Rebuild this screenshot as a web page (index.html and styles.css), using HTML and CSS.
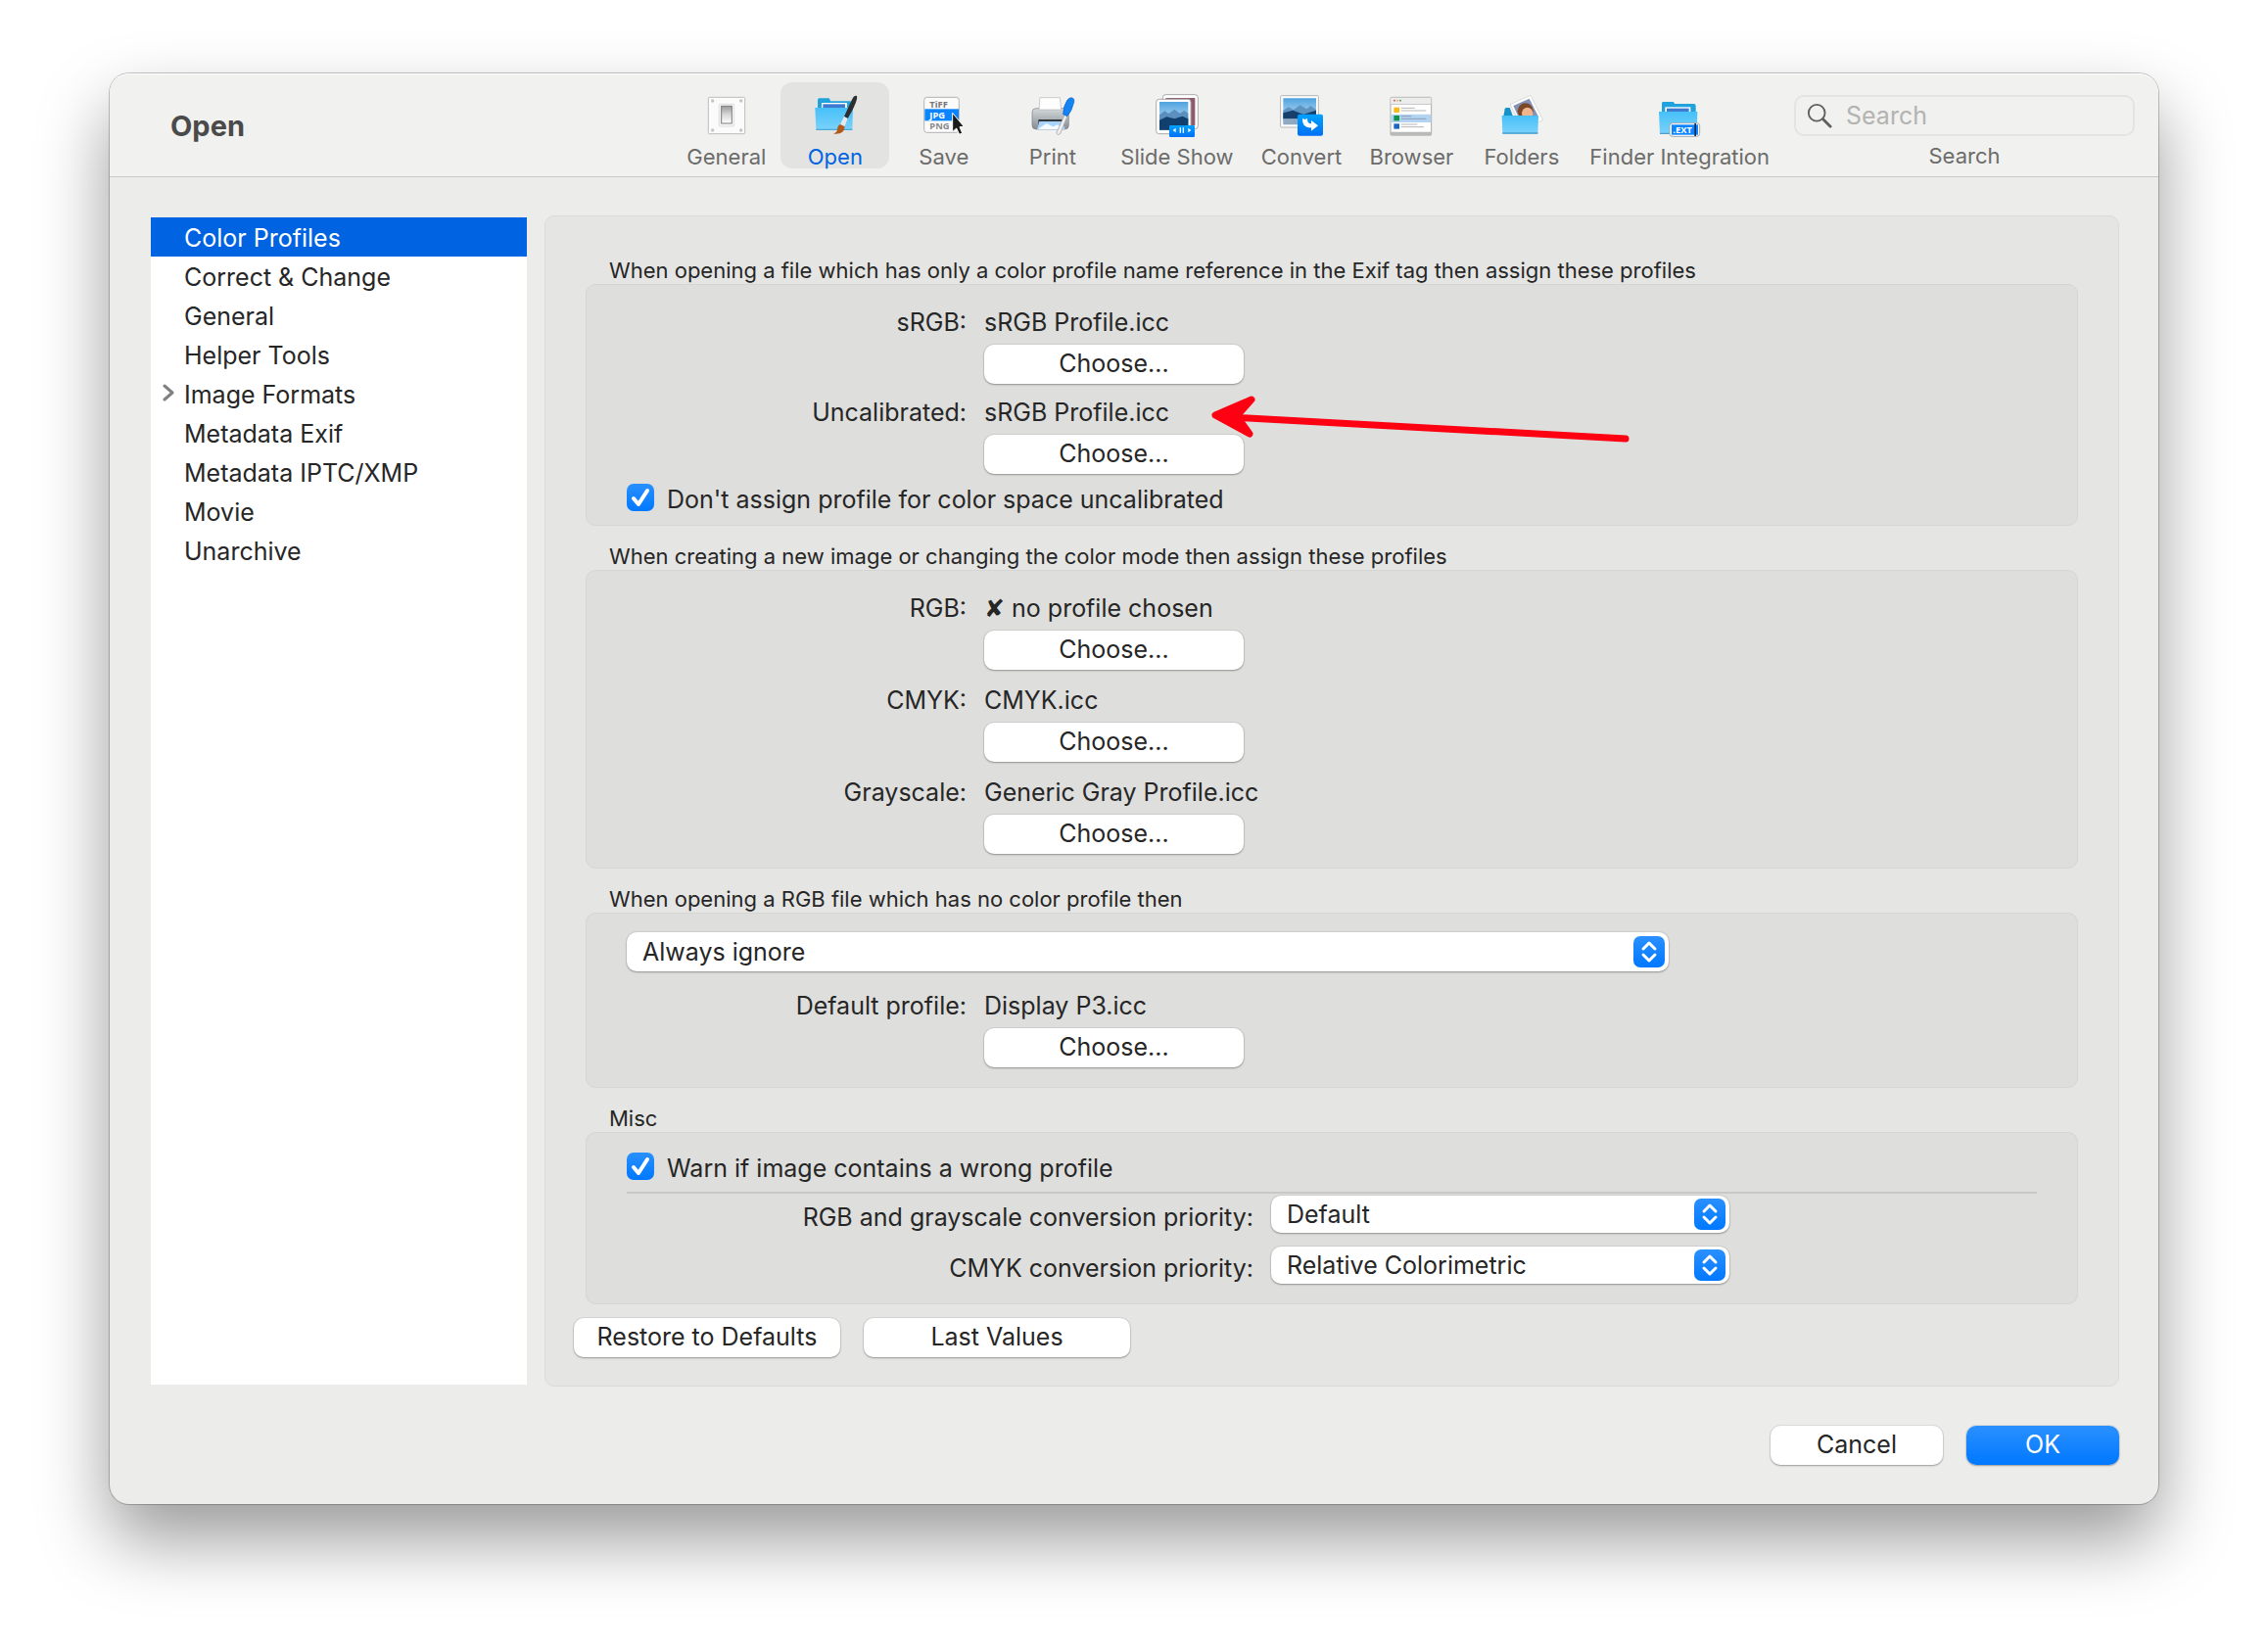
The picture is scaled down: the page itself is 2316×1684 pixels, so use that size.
FILE: index.html
```html
<!DOCTYPE html>
<html lang="en">
<head>
<meta charset="utf-8">
<title>Open</title>
<link rel="stylesheet" href="styles.css">
</head>
<body>
<svg class="defs" aria-hidden="true">
  <defs>
    <linearGradient id="folder" x1="0" y1="0" x2="0" y2="1"><stop offset="0" stop-color="#46c0f8"/><stop offset="1" stop-color="#7bd2fb"/></linearGradient>
    <linearGradient id="blue" x1="0" y1="0" x2="0" y2="1"><stop offset="0" stop-color="#00a2ff"/><stop offset="1" stop-color="#0070f5"/></linearGradient>
    <linearGradient id="sky" x1="0" y1="0" x2="0" y2="1"><stop offset="0" stop-color="#4fa3e0"/><stop offset="1" stop-color="#e4f1fa"/></linearGradient>
    <linearGradient id="metal" x1="0" y1="0" x2="0" y2="1"><stop offset="0" stop-color="#d5d9dc"/><stop offset="1" stop-color="#858c92"/></linearGradient>
    <linearGradient id="rocker" x1="0" y1="0" x2="0" y2="1"><stop offset="0" stop-color="#9a9a9a"/><stop offset=".5" stop-color="#d8d8d8"/><stop offset="1" stop-color="#fff"/></linearGradient>
    <symbol id="stepper" viewBox="0 0 32 32">
      <path d="M10 13l6-6 6 6M10 19l6 6 6-6" fill="none" stroke="#fff" stroke-width="3" stroke-linecap="round" stroke-linejoin="round"/>
    </symbol>
    <symbol id="tick" viewBox="0 0 28 28">
      <path d="M7 15l5 6 9-14" fill="none" stroke="#fff" stroke-width="4" stroke-linecap="round" stroke-linejoin="round"/>
    </symbol>
  </defs>
</svg>

<main class="window">
  <header class="toolbar">
    <h1 class="title">Open</h1>
    <nav class="tools" aria-label="Preference sections">
      <button class="tool" type="button">
        <svg class="tool-icon" viewBox="126 78 132 132" aria-hidden="true">
          <rect x="136" y="88" width="112" height="112" rx="3" fill="#fbfbfb" stroke="#bdbdbd" stroke-width="3"/>
          <g fill="#c4c4c4"><circle cx="149" cy="99" r="5"/><circle cx="236" cy="99" r="5"/><circle cx="149" cy="189" r="5"/><circle cx="236" cy="189" r="5"/></g>
          <rect x="169" y="109" width="46" height="68" rx="3" fill="#f6f6f6" stroke="#d2d2d2" stroke-width="2"/>
          <rect x="176" y="115" width="32" height="53" fill="url(#rocker)" stroke="#7d7d7d" stroke-width="3"/>
        </svg>
        <span>General</span>
      </button>
      <button class="tool tool-active" type="button" aria-pressed="true">
        <svg class="tool-icon" viewBox="456 78 132 132" aria-hidden="true">
          <path d="M468 96q0-5 5-5h28q3 0 4 3l2 6h60q7 0 7 6v30H468z" fill="#1fa3dc"/>
          <path d="M480 105h78v22h-78z" fill="#fff"/><path d="M484 109h68v14h-68z" fill="#3d7bd0"/>
          <path d="M460 120h116l-2 68H463z" fill="url(#folder)"/><path d="M463 185h111v4H463z" fill="#4aa9d8"/>
          <path d="M588 84q-8-4-14 9l-25 54 11 6q22-36 28-59 1-7 0-10z" fill="#2e2e30"/>
          <path d="M549 147l11 6-10 25-13-6z" fill="#e8e8ea"/>
          <path d="M537 171l14 7q-2 26-35 22 12-4 12-14 1-12 9-15z" fill="#b05a1c"/>
        </svg>
        <span>Open</span>
      </button>
      <button class="tool" type="button">
        <svg class="tool-icon" viewBox="783 78 132 132" aria-hidden="true">
          <rect x="788" y="88" width="107" height="108" rx="9" fill="#fbfbfb" stroke="#b3b3b3" stroke-width="3"/>
          <rect x="790" y="124" width="104" height="36" fill="#0a84ff"/>
          <g class="glyph-text"><text x="805" y="120" fill="#777">TiFF</text><text x="805" y="153" fill="#fff">JPG</text><text x="805" y="186" fill="#8a8a8a">PNG</text></g>
          <path d="M875 136v58l12-11 9 19 9-4-8-19 13-1z" fill="#1a1a1a" stroke="#fff" stroke-width="3" stroke-linejoin="round"/>
        </svg>
        <span>Save</span>
      </button>
      <button class="tool" type="button">
        <svg class="tool-icon" viewBox="1115 78 132 132" aria-hidden="true">
          <rect x="1118" y="122" width="112" height="64" rx="12" fill="url(#metal)" stroke="#7b8085" stroke-width="2"/>
          <path d="M1139 126l3-37h61l4 37z" fill="#fff" stroke="#b5b5b5" stroke-width="2"/>
          <path d="M1137 156h80v20h-80z" fill="#34393e"/><path d="M1140 162h72l7 25h-86z" fill="#a8d4fb"/><path d="M1140 182l22-14 20 10 14-6 18 14h-77z" fill="#f4faff"/>
          <path d="M1219 138l8 5-23 57q-8 6-12-2z" fill="#eee" stroke="#999" stroke-width="2"/>
          <path d="M1226 96q12-12 20-2 2 8-3 18-4 20-18 34l-12-6q0-24 13-44z" fill="#1484f5" stroke="#0b5bc0" stroke-width="2"/>
        </svg>
        <span>Print</span>
      </button>
      <button class="tool" type="button">
        <svg class="tool-icon" viewBox="237 78 132 132" aria-hidden="true">
          <rect x="259" y="80" width="108" height="105" rx="9" fill="#fff" stroke="#a9a9ad" stroke-width="3"/><path d="M268 90h90v84h-90z" fill="#8e5a6c"/>
          <rect x="239" y="94" width="106" height="106" rx="9" fill="#fff" stroke="#a9a9ad" stroke-width="3"/>
          <path d="M249 102h88v86h-88z" fill="url(#sky)"/>
          <path d="M249 142l16-12 12 8 18-13 16 12 14-8 12 8v51h-88z" fill="#5a8fbe"/><path d="M249 158l22-10 24 6 24-8 18 8v34h-88z" fill="#12406e"/>
          <rect x="279" y="174" width="78" height="36" rx="4" fill="url(#blue)"/>
          <path d="M299 182v14l-9-7zM337 182v14l9-7zM311 181h4v16h-4zM320 181h4v16h-4z" fill="#fff"/>
        </svg>
        <span>Slide Show</span>
      </button>
      <button class="tool" type="button">
        <svg class="tool-icon" viewBox="621 78 132 132" aria-hidden="true">
          <rect x="623" y="83" width="116" height="97" rx="3" fill="#fff" stroke="#b5b5b5" stroke-width="3"/>
          <path d="M631 91h101v81H631z" fill="url(#sky)"/>
          <path d="M631 128l16-10 16 8 20-14 20 12 12-10 17 12v30H631z" fill="#5f93c0"/><path d="M631 136l30-8 32 12 39-12v26H631z" fill="#163f6c"/><path d="M631 154h101v18H631z" fill="#8fa9c2"/>
          <rect x="675" y="140" width="78" height="66" rx="6" fill="url(#blue)"/>
          <path d="M690 153l8 3 7-4q-1 17 12 17v-10l21 16-21 16v-10q-28 2-27-28z" fill="#fff"/>
        </svg>
        <span>Convert</span>
      </button>
      <button class="tool" type="button">
        <svg class="tool-icon" viewBox="956 78 132 132" aria-hidden="true">
          <rect x="959" y="88" width="125" height="116" rx="3" fill="#fff" stroke="#aaa" stroke-width="3"/>
          <path d="M960 89h123v19H960z" fill="#ececec"/><path d="M959 108h125v2H959zM959 194h125v11H959z" fill="#b9b9b9"/>
          <path d="M960 140h123v25H960z" fill="#b4d2f2"/>
          <circle cx="971" cy="98" r="2.500" fill="#d33"/><circle cx="980" cy="98" r="2.500" fill="#e5a53a"/><circle cx="989" cy="98" r="2.500" fill="#4a8a3a"/>
          <path d="M969 119h17v16h-17z" fill="#fdb913"/><path d="M969 144h17v16h-17z" fill="#0d9547"/><path d="M969 169h17v16h-17z" fill="#1766c8"/>
          <path d="M991 121h42M991 129h77M991 171h50M991 179h70" stroke="#b5b5b5" stroke-width="3"/><path d="M991 146h32M991 154h77" stroke="#8b9fb8" stroke-width="3"/>
        </svg>
        <span>Browser</span>
      </button>
      <button class="tool" type="button">
        <svg class="tool-icon" viewBox="0 78 132 132" aria-hidden="true">
          <path d="M10 146l4-22q1-4 5-4h10l10 26z" fill="#1592c8"/>
          <path d="M30 110l63-28 38 76-62 26z" fill="#fff" stroke="#ccc" stroke-width="2"/>
          <path d="M40 114l49-22 28 56-56 12z" fill="#8492b8"/>
          <circle cx="77" cy="130" r="24" fill="#7a4728"/><ellipse cx="83" cy="137" rx="17" ry="18" fill="#f0b58c"/>
          <path d="M5 144h112l-2 56H7z" fill="url(#folder)"/><path d="M7 196h108v4H7z" fill="#4a9fce"/>
        </svg>
        <span>Folders</span>
      </button>
      <button class="tool" type="button">
        <svg class="tool-icon" viewBox="0 78 132 132" aria-hidden="true">
          <path d="M12 106q0-4 5-4h29q4 0 5 6h59q6 0 6 6v20H12z" fill="#1fa3dc"/>
          <path d="M22 118h78v16H22z" fill="#fff"/><path d="M27 122h68v12H27z" fill="#3d7bd0"/>
          <path d="M3 132h118l-2 69H6z" fill="url(#folder)"/><path d="M6 197h113v4H6z" fill="#4a9fce"/>
          <rect x="36" y="167" width="92" height="41" rx="9" fill="#fff" stroke="#9fa9b3" stroke-width="3"/><path d="M42 172h81v31H42z" fill="#0a84ff"/>
          <text class="glyph-text" x="46" y="197" fill="#fff">.EXT</text><path d="M112 168h5v39h-5z" fill="#0c2a55"/>
        </svg>
        <span>Finder Integration</span>
      </button>
      <div class="search">
        <div class="search-field">
          <svg class="search-icon" viewBox="0 0 28 28" aria-hidden="true"><circle cx="11" cy="11" r="9" fill="none" stroke="#5f5f5f" stroke-width="2"/><path d="M18 18l8 8" stroke="#5f5f5f" stroke-width="3" stroke-linecap="round"/></svg>
          <input class="search-input" id="search" type="search" placeholder="Search">
        </div>
        <label for="search">Search</label>
      </div>
    </nav>
  </header>

  <div class="content">
    <nav class="sidebar" aria-label="Open settings">
      <a class="side-link side-current" href="#color-profiles" aria-current="page">Color Profiles</a>
      <a class="side-link" href="#correct">Correct &amp; Change</a>
      <a class="side-link" href="#general">General</a>
      <a class="side-link" href="#helper-tools">Helper Tools</a>
      <a class="side-link" href="#image-formats"><svg class="disclosure" viewBox="0 0 12 18" aria-hidden="true"><path d="M2 2l8 7-8 7" fill="none" stroke="#808080" stroke-width="3" stroke-linecap="round" stroke-linejoin="round"/></svg>Image Formats</a>
      <a class="side-link" href="#metadata-exif">Metadata Exif</a>
      <a class="side-link" href="#metadata-iptc">Metadata IPTC/XMP</a>
      <a class="side-link" href="#movie">Movie</a>
      <a class="side-link" href="#unarchive">Unarchive</a>
    </nav>

    <form class="panel" id="color-profiles">
      <section class="group">
        <h2 class="group-title">When opening a file which has only a color profile name reference in the Exif tag then assign these profiles</h2>
        <div class="box box-tight">
          <div class="profile">
            <span class="label">sRGB:</span><span class="value">sRGB Profile.icc</span>
            <button class="button choose" type="button">Choose...</button>
          </div>
          <div class="profile">
            <span class="label">Uncalibrated:</span>
            <span class="value marked">sRGB Profile.icc
              <svg class="arrow" viewBox="0 0 430 50" aria-hidden="true"><path d="M425 35L20 13" fill="none" stroke="#fd0012" stroke-width="7" stroke-linecap="round"/><path d="M43-5L6 11l35 19-13-18z" fill="#fd0012" stroke="#fd0012" stroke-width="7" stroke-linejoin="round"/></svg>
            </span>
            <button class="button choose" type="button">Choose...</button>
          </div>
          <label class="check"><span class="check-box"><input type="checkbox" checked><svg aria-hidden="true"><use href="#tick"/></svg></span>Don't assign profile for color space uncalibrated</label>
        </div>
      </section>

      <section class="group">
        <h2 class="group-title">When creating a new image or changing the color mode then assign these profiles</h2>
        <div class="box">
          <div class="profile">
            <span class="label">RGB:</span><span class="value">✘ no profile chosen</span>
            <button class="button choose" type="button">Choose...</button>
          </div>
          <div class="profile">
            <span class="label">CMYK:</span><span class="value">CMYK.icc</span>
            <button class="button choose" type="button">Choose...</button>
          </div>
          <div class="profile">
            <span class="label">Grayscale:</span><span class="value">Generic Gray Profile.icc</span>
            <button class="button choose" type="button">Choose...</button>
          </div>
        </div>
      </section>

      <section class="group">
        <h2 class="group-title" id="no-profile">When opening a RGB file which has no color profile then</h2>
        <div class="box box-loose">
          <div class="popup popup-wide">
            <select aria-labelledby="no-profile"><option>Always ignore</option></select>
            <svg class="stepper" aria-hidden="true"><use href="#stepper"/></svg>
          </div>
          <div class="profile">
            <span class="label">Default profile:</span><span class="value">Display P3.icc</span>
            <button class="button choose" type="button">Choose...</button>
          </div>
        </div>
      </section>

      <section class="group">
        <h2 class="group-title">Misc</h2>
        <div class="box box-misc">
          <label class="check"><span class="check-box"><input type="checkbox" checked><svg aria-hidden="true"><use href="#tick"/></svg></span>Warn if image contains a wrong profile</label>
          <hr class="rule">
          <div class="priorities">
            <label class="label" for="rgb-priority">RGB and grayscale conversion priority:</label>
            <div class="popup">
              <select id="rgb-priority"><option>Default</option></select>
              <svg class="stepper" aria-hidden="true"><use href="#stepper"/></svg>
            </div>
            <label class="label" for="cmyk-priority">CMYK conversion priority:</label>
            <div class="popup">
              <select id="cmyk-priority"><option>Relative Colorimetric</option></select>
              <svg class="stepper" aria-hidden="true"><use href="#stepper"/></svg>
            </div>
          </div>
        </div>
      </section>

      <div class="panel-actions">
        <button class="button reset" type="button">Restore to Defaults</button>
        <button class="button reset" type="button">Last Values</button>
      </div>
    </form>
  </div>

  <footer class="actions">
    <button class="button cancel" type="button">Cancel</button>
    <button class="button ok" type="submit" form="color-profiles">OK</button>
  </footer>
</main>
</body>
</html>
```
FILE: styles.css
```css
* { box-sizing: border-box; }

body {
  margin: 0;
  min-height: 100vh;
  padding: 75px 112px;
  background: #fff;
  color: #262626;
  font: 25px/32px Inter, "Liberation Sans", sans-serif;
}

button, input, select { font: inherit; color: inherit; }

.defs { position: absolute; width: 0; height: 0; }

.window {
  background: #ececea;
  border-radius: 20px;
  box-shadow: 0 0 0 1px rgba(0, 0, 0, .22), 0 36px 72px rgba(0, 0, 0, .4);
}

/* Toolbar */
.toolbar {
  display: flex;
  align-items: center;
  justify-content: space-between;
  padding: 8px 24px 8px 62px;
  border-top: 1px solid #fff;
  border-bottom: 1px solid #c9c9c8;
  border-radius: 20px 20px 0 0;
  background: #f1f1ef;
}

.title { margin: 0; padding-top: 1px; font-size: 29px; font-weight: 700; color: #4a4a4a; }

.tools { display: flex; font-size: 22px; line-height: 26px; color: #6c6c6b; }

.tool {
  display: flex;
  flex-direction: column;
  align-items: center;
  gap: 7px;
  height: 88px;
  min-width: 111px;
  padding: 12px 14px 0;
  border: 0;
  border-radius: 12px;
  background: none;
  white-space: nowrap;
}

.tool-active { background: #e3e3e1; color: #0064e1; }
.tool-icon { flex: none; width: 44px; height: 44px; overflow: visible; }
.glyph-text { font: 700 28px "Open Sans", sans-serif; }

.search {
  display: flex;
  flex-direction: column;
  align-items: center;
  gap: 7px;
  width: 348px;
  margin-left: 11px;
  padding-top: 13px;
}

.search-field {
  display: flex;
  align-items: center;
  gap: 14px;
  width: 100%;
  height: 42px;
  padding: 0 11px;
  border: 2px solid #e4e4e2;
  border-radius: 10px;
}

.search-icon { flex: none; width: 26px; height: 26px; }
.search-input { flex: 1; min-width: 0; padding: 0; border: 0; background: none; font-size: 25px; }
.search-input::placeholder { color: #b3b3b2; opacity: 1; }

/* Body */
.content { display: flex; gap: 18px; padding: 39px 40px 0 42px; }

.sidebar { flex: none; width: 384px; margin: 2px 0; background: #fff; }

.side-link {
  display: block;
  position: relative;
  padding: 5px 34px 3px;
  color: inherit;
  text-decoration: none;
}

.side-current { background: #0063e1; color: #fff; }
.disclosure { position: absolute; left: 12px; top: 10px; width: 12px; height: 18px; }

.panel {
  flex: 1;
  min-width: 0;
  padding: 43px 29px 29px;
  border: 1px solid #dbdbd9;
  border-radius: 10px;
  background: #e5e5e3;
}

.group { margin: 0 12px 19px; }
.group-title { margin: 0; padding: 0 24px 2px; font-size: 22px; line-height: 24px; font-weight: 400; }

.box {
  display: flex;
  flex-direction: column;
  gap: 15px;
  padding: 22px 41px 14px;
  border: 1px solid #d5d5d3;
  border-radius: 10px;
  background: #dededc;
}

.box-tight { gap: 13px; padding-bottom: 10px; }
.box-tight .check { margin-top: -3px; }
.box-loose { gap: 19px; padding: 19px 41px 20px; }
.box-misc { gap: 0; padding: 20px 41px; }

.profile { display: grid; grid-template-columns: 347px 265px; gap: 7px 18px; }
.label { text-align: right; }
.value { white-space: nowrap; }
.marked { position: relative; }
.arrow { position: absolute; left: 230px; top: 8px; width: 430px; height: 50px; overflow: visible; }

.button {
  height: 40px;
  padding: 0 0 2px;
  border: 0;
  border-radius: 10px;
  background: #fff;
  box-shadow: 0 0 0 1px rgba(0, 0, 0, .06), 0 1px 2px rgba(0, 0, 0, .3);
}

.choose { grid-column: 2; }

.check { display: flex; gap: 13px; }
.check-box { display: grid; flex: none; width: 28px; height: 28px; }
.check-box > * { grid-area: 1 / 1; width: 28px; height: 28px; margin: 0; }
.check-box input {
  appearance: none;
  border-radius: 7px;
  background: linear-gradient(#2a90ff, #0078ff);
}
.check-box svg, .stepper { pointer-events: none; }

.popup { display: grid; height: 38px; align-items: center; }
.popup > * { grid-area: 1 / 1; }
.popup select {
  appearance: none;
  width: 100%;
  height: 100%;
  padding: 0 48px 1px 16px;
  border: 0;
  border-radius: 10px;
  background: #fff;
  box-shadow: 0 0 0 1px rgba(0, 0, 0, .06), 0 1px 2px rgba(0, 0, 0, .3);
}
.popup-wide { width: 1064px; height: 40px; }

.stepper {
  justify-self: end;
  width: 32px;
  height: 32px;
  margin-right: 4px;
  border-radius: 7px;
  background: linear-gradient(#2a90ff, #0078ff);
}

.rule { width: 100%; height: 2px; margin: 8px 0 2px; border: 0; background: #c8c8c6; }

.priorities { display: grid; grid-template-columns: 640px 468px; gap: 14px 18px; }
.priorities .label { padding-top: 6px; }

.panel-actions { display: flex; gap: 24px; margin-top: -5px; }
.reset { width: 272px; }

.actions { display: flex; justify-content: flex-end; gap: 24px; padding: 40px; }
.cancel { width: 176px; }
.ok { width: 156px; background: linear-gradient(#2a90ff, #0078ff); color: #fff; }
```
